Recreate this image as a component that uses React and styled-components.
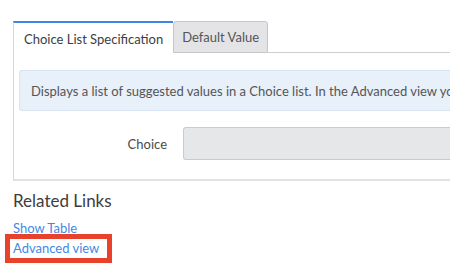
import React from "react";
import styled, { createGlobalStyle } from "styled-components";

const Global = createGlobalStyle`
  html, body { margin: 0; padding: 0; background: #fff; }
  body { font-family: Lato, "Open Sans", "Liberation Sans", sans-serif; color: #4a4a4a; overflow: hidden; }
`;

const Page = styled.div`
  width: 450px;
  height: 270px;
  padding: 21px 0 0 13px;
  box-sizing: border-box;
  overflow: hidden;
`;

const TabRow = styled.div`
  display: flex;
  align-items: flex-end;
  height: 32px;
`;

const Tab = styled.div`
  box-sizing: border-box;
  height: ${(p) => (p.$active ? "33px" : "32px")};
  display: flex;
  align-items: center;
  padding: 0 ${(p) => (p.$active ? "10px" : "8px")};
  font-size: 13px;
  white-space: nowrap;
  color: ${(p) => (p.$active ? "#3d3d3d" : "#555")};
  background: ${(p) => (p.$active ? "#fff" : "#e4e4e6")};
  border: 1px solid ${(p) => (p.$active ? "#d6d6d6" : "#c6c6c8")};
  border-top: ${(p) => (p.$active ? "2px solid #3d86e4" : "1px solid #c6c6c8")};
  border-bottom: ${(p) => (p.$active ? "none" : "1px solid #c6c6c8")};
  border-right: ${(p) => (p.$active ? "none" : "1px solid #c6c6c8")};
  border-radius: ${(p) => (p.$active ? "0" : "3px 3px 0 0")};
  margin-bottom: ${(p) => (p.$active ? "-1px" : "0")};
`;

const TabFill = styled.div`
  flex: 1;
  border-bottom: 1px solid #cfcfcf;
`;

const Panel = styled.div`
  border-left: 1px solid #d6d6d6;
  border-bottom: 2px solid #e2e2e2;
  padding: 17px 0 19px 5px;
  display: flex;
  flex-direction: column;
  gap: 16px;
`;

const Info = styled.div`
  box-sizing: border-box;
  height: 41px;
  display: flex;
  align-items: center;
  padding-left: 11px;
  background: #e8f0fa;
  border: 1px solid #d8e4f2;
  border-right: none;
  border-radius: 3px 0 0 3px;
  font-size: 13px;
  color: #555;
  white-space: nowrap;
  overflow: hidden;
`;

const FieldRow = styled.div`
  display: grid;
  grid-template-columns: 148px 1fr;
  column-gap: 16px;
  align-items: center;
`;

const Label = styled.div`
  text-align: right;
  font-size: 13px;
  color: #4a4a4a;
`;

const Input = styled.div`
  box-sizing: border-box;
  height: 33px;
  background: #e6e7e9;
  border: 1px solid #cbcbcd;
  border-right: none;
  border-radius: 3px 0 0 3px;
`;

const Related = styled.div`
  padding-top: 9px;
  display: flex;
  flex-direction: column;
  align-items: flex-start;
`;

const Heading = styled.div`
  font-size: 17px;
  color: #3d3d3d;
  line-height: 22px;
  margin-bottom: 8px;
`;

const Link = styled.a`
  font-size: 13px;
  line-height: 17px;
  color: #3f89e6;
  text-decoration: none;
  cursor: pointer;
`;

const Highlight = styled.span`
  display: inline-block;
  border: 5px solid #e8412c;
  padding: 1px 8px 1px 3px;
  margin-left: -8px;
  margin-top: -3px;
  line-height: 14px;
`;

export default function App() {
  return (
    <Page>
      <Global />
      <TabRow>
        <Tab $active>Choice List Specification</Tab>
        <Tab>Default Value</Tab>
        <TabFill />
      </TabRow>
      <Panel>
        <Info>
          Displays a list of suggested values in a Choice list. In the Advanced view you can
          configure additional options.
        </Info>
        <FieldRow>
          <Label>Choice</Label>
          <Input />
        </FieldRow>
      </Panel>
      <Related>
        <Heading>Related Links</Heading>
        <Link>Show Table</Link>
        <Highlight>
          <Link>Advanced view</Link>
        </Highlight>
      </Related>
    </Page>
  );
}
